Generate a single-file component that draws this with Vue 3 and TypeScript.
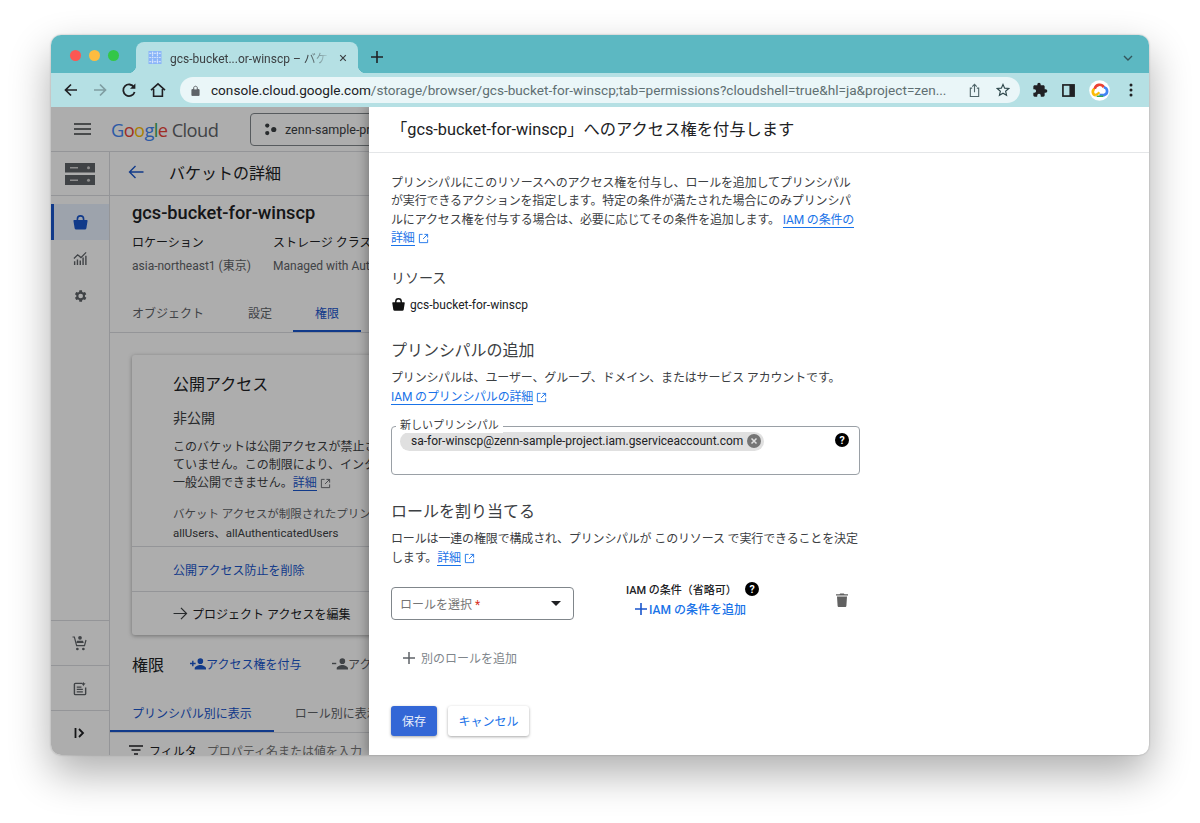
<template>
  <div class="desk">
    <div class="window">
      <div class="tabstrip">
        <div class="lights"><i class="red"></i><i class="yellow"></i><i class="green"></i></div>
        <div class="tab">
          <svg class="favicon" viewBox="0 0 16 16" width="16" height="13">
            <rect width="16" height="16" fill="#8ab4f8" />
            <path d="M1 3h14M1 8h14M1 13h14M5 1v14M11 1v14" stroke="#d5e4fb" stroke-width="1.4" stroke-dasharray="2 1" fill="none" />
          </svg>
          <span class="tab-title">gcs-bucket...or-winscp – バケット</span>
          <svg class="tab-close" viewBox="0 0 10 10" width="10" height="10">
            <path d="M1.5 1.5l7 7M8.5 1.5l-7 7" stroke="#3c4043" stroke-width="1.5" />
          </svg>
        </div>
        <svg class="new-tab" viewBox="0 0 12 12" width="12" height="12">
          <path d="M6 0v12M0 6h12" stroke="#1f2124" stroke-width="1.6" />
        </svg>
        <svg class="tab-menu" viewBox="0 0 10 6" width="10" height="6">
          <path d="M1 1l4 4 4-4" stroke="#33565b" stroke-width="1.4" fill="none" />
        </svg>
      </div>

      <div class="toolbar">
        <svg class="nav" viewBox="0 0 16 16" width="16" height="16">
          <path d="M14 8H2.5M8 2.5L2.5 8 8 13.5" stroke="#202124" stroke-width="1.7" fill="none" />
        </svg>
        <svg class="nav" viewBox="0 0 16 16" width="16" height="16">
          <path d="M2 8h11.5M8 2.5L13.5 8 8 13.5" stroke="#7f9da1" stroke-width="1.7" fill="none" />
        </svg>
        <svg class="nav" viewBox="0 0 16 16" width="16" height="16">
          <path d="M13 5.2A5.8 5.8 0 1 0 13.6 10" stroke="#202124" stroke-width="1.8" fill="none" />
          <path d="M14.4 1.4v5.4H9z" fill="#202124" />
        </svg>
        <svg class="nav" viewBox="0 0 16 16" width="16" height="16">
          <path d="M1 8.2L8 1.8l7 6.4M3.6 7v7.2h8.8V7" stroke="#202124" stroke-width="1.6" fill="none" />
        </svg>
        <div class="omnibox">
          <svg viewBox="0 0 10 12" width="9" height="11">
            <path d="M1 5h8v6.5H1zM3 5V3.2a2 2 0 0 1 4 0V5" fill="#5f6368" stroke="#5f6368" stroke-width="1" />
            <rect x="3.6" y="1.8" width="2.8" height="3" fill="#eaf6f8" />
          </svg>
          <span class="url"><b>console.cloud.google.com</b>/storage/browser/gcs-bucket-for-winscp;tab=permissions?cloudshell=true&amp;hl=ja&amp;project=zen...</span>
          <svg class="omni-share" viewBox="0 0 14 16" width="13" height="15">
            <path d="M4.5 5.5H2.5v9h9v-9h-2M7 10V1.5M4.6 3.8L7 1.4l2.4 2.4" stroke="#50666a" stroke-width="1.2" fill="none" />
          </svg>
          <svg class="omni-star" viewBox="0 0 16 16" width="14" height="14">
            <path d="M8 1.6l1.9 4.3 4.7.4-3.6 3.1 1.1 4.6L8 11.6 3.9 14l1.1-4.6-3.6-3.1 4.7-.4z" stroke="#30494d" stroke-width="1.3" fill="none" />
          </svg>
        </div>
        <div class="extensions">
          <svg viewBox="0 0 24 24" width="16" height="16">
            <path d="M20.5 11H19V7c0-1.1-.9-2-2-2h-4V3.5a2.5 2.5 0 0 0-5 0V5H4c-1.1 0-2 .9-2 2v3.8h1.5a2.7 2.7 0 0 1 0 5.4H2V20c0 1.100.9 2 2 2h3.800v-1.500a2.700 2.700 0 0 1 5.400 0V22H17c1.100 0 2-.9 2-2v-4h1.500a2.500 2.500 0 0 0 0-5z" fill="#202124" />
          </svg>
          <svg viewBox="0 0 14 14" width="13" height="13">
            <rect x="1" y="1" width="12" height="12" fill="none" stroke="#202124" stroke-width="1.8" />
            <rect x="8" y="1" width="5" height="12" fill="#202124" />
          </svg>
          <svg class="avatar" viewBox="0 0 22 22" width="21" height="21">
            <circle cx="11" cy="11" r="10.800" fill="#fff" />
            <path d="M7.200 15.800a3.400 3.400 0 0 1-1.200-6.500" stroke="#fbbc04" stroke-width="2.800" fill="none" />
            <path d="M6 9.300a5.200 5.200 0 0 1 9.600-1.700" stroke="#ea4335" stroke-width="2.800" fill="none" />
            <path d="M15.600 7.600a4.200 4.200 0 0 1 .2 8.200H11" stroke="#4285f4" stroke-width="2.800" fill="none" />
            <path d="M8 17h7" stroke="#34a853" stroke-width="1.600" />
            <path d="M7.200 15.800L11 13" stroke="#fbbc04" stroke-width="2.400" />
          </svg>
          <svg viewBox="0 0 4 14" width="4" height="14">
            <circle cx="2" cy="2" r="1.500" fill="#202124" /><circle cx="2" cy="7" r="1.500" fill="#202124" /><circle cx="2" cy="12" r="1.500" fill="#202124" />
          </svg>
        </div>
      </div>

      <div class="viewport">
        <div class="console">
          <header class="top">
            <svg class="burger" viewBox="0 0 17 12" width="17" height="12">
              <path d="M0 1h17M0 6h17M0 11h17" stroke="#3c4043" stroke-width="1.600" />
            </svg>
            <span class="logo"><i class="g-b">G</i><i class="g-r">o</i><i class="g-y">o</i><i class="g-b">g</i><i class="g-g">l</i><i class="g-r">e</i> <em>Cloud</em></span>
            <div class="project">
              <svg viewBox="0 0 14 14" width="13" height="13">
                <circle cx="3.500" cy="2.800" r="2.300" fill="#3c4043" />
                <circle cx="3.500" cy="10.800" r="2.300" fill="#3c4043" />
                <circle cx="10.500" cy="7" r="2.800" fill="#3c4043" />
              </svg>
              <span>zenn-sample-project</span>
            </div>
          </header>
          <div class="console-main">
            <nav class="rail">
              <div class="rail-logo">
                <svg viewBox="0 0 30 22" width="30" height="22">
                  <path d="M0 0h30v9.500H0zM0 12h30v10H0z" fill="#5f6368" />
                  <path d="M5 4h8v1.500H5zM5 16.500h8V18H5z" fill="#d0d0d0" />
                  <circle cx="23.500" cy="4.700" r="1.500" fill="#d0d0d0" />
                  <circle cx="23.500" cy="17.200" r="1.500" fill="#d0d0d0" />
                </svg>
              </div>
              <div class="rail-item active">
                <svg viewBox="0 0 24 24" width="17" height="17"><path fill-rule="evenodd" d="M6.500 8.500V7a5.500 5.500 0 0 1 11 0v1.500H21c.6 0 1 .5 1 1.100l-1.700 10.600a2.200 2.200 0 0 1-2.200 1.800H5.900a2.200 2.200 0 0 1-2.200-1.800L2 9.600c0-.6.400-1.100 1-1.100zM8.800 8.500h6.400V7a3.200 3.200 0 0 0-6.400 0z" fill="#1a56cc" /></svg>
              </div>
              <div class="rail-item">
                <svg viewBox="0 0 16 16" width="15" height="15"><path d="M1 15v-4h1.500v4zM4 15V9h1.500v6zM7 15v-5h1.500v5zM10 15V7h1.500v8zM13 15V5h1.500v10z" fill="#5f6368" /><path d="M1 8l4-4 3.500 3L14 1.500" stroke="#5f6368" stroke-width="1.300" fill="none" /></svg>
              </div>
              <div class="rail-item">
                <svg viewBox="0 0 24 24" width="16" height="16"><path d="M19.400 13a7.700 7.700 0 0 0 0-2l2.100-1.600-2-3.500-2.500 1a7.300 7.300 0 0 0-1.700-1L15 3.300h-4l-.4 2.600a7.300 7.300 0 0 0-1.700 1l-2.500-1-2 3.500L6.500 11a7.700 7.700 0 0 0 0 2l-2.100 1.600 2 3.500 2.500-1a7.300 7.300 0 0 0 1.700 1l.4 2.600h4l.4-2.600a7.300 7.300 0 0 0 1.700-1l2.500 1 2-3.500zM13 15.500a3.500 3.500 0 1 1 0-7 3.500 3.500 0 0 1 0 7z" fill="#5f6368" /></svg>
              </div>
              <div class="rail-bottom">
                <div class="rail-foot">
                  <svg viewBox="0 0 24 24" width="18" height="18"><path d="M12 2.500a2.500 2.500 0 1 1 0 5 2.500 2.500 0 0 1 0-5zM7 12l1-3h8l1 3z" fill="#5f6368" /><path d="M2 4h2.500l3 11.500h10.500L20 8" stroke="#5f6368" stroke-width="1.600" fill="none" /><circle cx="8.500" cy="20" r="1.800" fill="#5f6368" /><circle cx="16.500" cy="20" r="1.800" fill="#5f6368" /></svg>
                </div>
                <div class="rail-foot">
                  <svg viewBox="0 0 16 16" width="15" height="15"><path d="M10 2.500H2.500c-.5 0-1 .5-1 1v10c0 .5.500 1 1 1h10c.5 0 1-.5 1-1V7" stroke="#5f6368" stroke-width="1.500" fill="none" /><path d="M4 6.500h5M4 9h6.500M4 11.500h6.500" stroke="#5f6368" stroke-width="1.300" /><path d="M11 1l1 1.500 1.500.5-1.500 1-1 1.500-.7-1.500L9 3l1.300-.5z" fill="#5f6368" /></svg>
                </div>
                <div class="rail-foot">
                  <svg viewBox="0 0 12 10" width="12" height="10"><path d="M1.500 0v10" stroke="#202124" stroke-width="1.800" /><path d="M5 1l4 4-4 4" stroke="#202124" stroke-width="1.800" fill="none" /></svg>
                </div>
              </div>
            </nav>

            <main class="detail">
              <div class="detail-bar">
                <svg viewBox="0 0 16 14" width="16" height="14">
                  <path d="M15.500 7H1.500M7.500 1L1.500 7l6 6" stroke="#1a56cc" stroke-width="1.400" fill="none" />
                </svg>
                <span>バケットの詳細</span>
              </div>
              <div class="detail-body">
                <h1 class="bucket-name">gcs-bucket-for-winscp</h1>
                <div class="meta">
                  <div class="meta-col">
                    <div>ロケーション</div>
                    <div class="muted">asia-northeast1 (東京)</div>
                  </div>
                  <div class="meta-col">
                    <div>ストレージ クラス</div>
                    <div class="muted">Managed with Autoclass</div>
                  </div>
                </div>
              </div>
              <div class="tabs">
                <span class="t1">オブジェクト</span>
                <span class="t2">設定</span>
                <span class="t3">権限</span>
              </div>
              <section class="card">
                <div class="card-main">
                  <h2>公開アクセス</h2>
                  <h3>非公開</h3>
                  <p>このバケットは公開アクセスが禁止されており、公開され<br />ていません。この制限により、インターネット上で<br />一般公開できません。<a>詳細</a>
                    <svg class="ext" viewBox="0 0 12 12" width="11" height="11"><path d="M5 1.500H1.500v9h9V7M7 1.500h3.500V5M10.500 1.500L5.500 6.500" stroke="#5f6368" stroke-width="1" fill="none" /></svg>
                  </p>
                  <p class="restricted">バケット アクセスが制限されたプリンシパル</p>
                  <p class="users">allUsers、allAuthenticatedUsers</p>
                </div>
                <div class="card-link">公開アクセス防止を削除</div>
                <div class="card-edit">
                  <svg viewBox="0 0 16 14" width="15" height="13"><path d="M.5 7h14M8.500 1l6 6-6 6" stroke="#3c4043" stroke-width="1.300" fill="none" /></svg>
                  <span>プロジェクト アクセスを編集</span>
                </div>
              </section>
              <div class="perm-bar">
                <h2>権限</h2>
                <span class="grant">
                  <svg viewBox="0 0 17 13" width="16" height="13"><path d="M11 1a3 3 0 1 1 0 6 3 3 0 0 1 0-6zM5 13v-1.500C5 9.500 9 8 11 8s6 1.500 6 3.500V13z" fill="#1a56cc" /><path d="M0 6.500h6M3 3.500v6" stroke="#1a56cc" stroke-width="1.500" /></svg>
                  アクセス権を付与
                </span>
                <span class="revoke">
                  <svg viewBox="0 0 17 13" width="16" height="13"><path d="M11 1a3 3 0 1 1 0 6 3 3 0 0 1 0-6zM5 13v-1.500C5 9.500 9 8 11 8s6 1.500 6 3.500V13z" fill="#5f6368" /><path d="M0 6.500h4.500" stroke="#5f6368" stroke-width="1.500" /></svg>
                  アクセス権を削除
                </span>
              </div>
              <div class="view-tabs">
                <span class="v1">プリンシパル別に表示</span>
                <span class="v2">ロール別に表示</span>
              </div>
              <div class="filter">
                <svg viewBox="0 0 14 10" width="14" height="10"><path d="M0 1h14M2.500 5h9M5 9h4" stroke="#202124" stroke-width="1.500" /></svg>
                <span class="filter-label">フィルタ</span>
                <span class="filter-hint">プロパティ名または値を入力</span>
              </div>
            </main>
          </div>
        </div>

        <div class="scrim"></div>

        <aside class="drawer">
          <div class="drawer-head">「gcs-bucket-for-winscp」へのアクセス権を付与します</div>
          <div class="drawer-body">
            <p class="intro">
              プリンシパルにこのリソースへのアクセス権を付与し、ロールを追加してプリンシパル<br />
              が実行できるアクションを指定します。特定の条件が満たされた場合にのみプリンシパ<br />
              ルにアクセス権を付与する場合は、必要に応じてその条件を追加します。 <a>IAM の条件の</a><br />
              <a>詳細</a>
              <svg class="ext" viewBox="0 0 12 12" width="11" height="11"><path d="M5 1.500H1.500v9h9V7M7 1.500h3.500V5M10.500 1.500L5.500 6.500" stroke="#1a73e8" stroke-width="1" fill="none" /></svg>
            </p>

            <h4 class="resource-title">リソース</h4>
            <div class="resource">
              <svg viewBox="0 0 24 24" width="15" height="15"><path fill-rule="evenodd" d="M6.500 8.500V7a5.500 5.500 0 0 1 11 0v1.500H21c.6 0 1 .5 1 1.100l-1.700 10.600a2.200 2.200 0 0 1-2.200 1.800H5.900a2.200 2.200 0 0 1-2.200-1.800L2 9.600c0-.6.400-1.100 1-1.100zM8.800 8.500h6.400V7a3.200 3.200 0 0 0-6.400 0z" fill="#111" /></svg>
              <span>gcs-bucket-for-winscp</span>
            </div>

            <h3 class="section add-title">プリンシパルの追加</h3>
            <p class="desc">
              プリンシパルは、ユーザー、グループ、ドメイン、またはサービス アカウントです。<br />
              <a>IAM のプリンシパルの詳細</a>
              <svg class="ext" viewBox="0 0 12 12" width="11" height="11"><path d="M5 1.500H1.500v9h9V7M7 1.500h3.500V5M10.500 1.500L5.500 6.500" stroke="#1a73e8" stroke-width="1" fill="none" /></svg>
            </p>

            <div class="principal">
              <span class="field-label">新しいプリンシパル</span>
              <div class="chip">
                <span>sa-for-winscp@zenn-sample-project.iam.gserviceaccount.com</span>
                <svg viewBox="0 0 14 14" width="14" height="14"><circle cx="7" cy="7" r="7" fill="#757575" /><path d="M4.500 4.500l5 5M9.500 4.500l-5 5" stroke="#e0e0e0" stroke-width="1.500" /></svg>
              </div>
              <svg class="help" viewBox="0 0 14 14" width="14" height="14"><circle cx="7" cy="7" r="7" fill="#000" /><text x="7" y="10.700" text-anchor="middle" class="help-mark">?</text></svg>
            </div>

            <h3 class="section role-title">ロールを割り当てる</h3>
            <p class="desc">
              ロールは一連の権限で構成され、プリンシパルが このリソース で実行できることを決定<br />
              します。<a>詳細</a>
              <svg class="ext" viewBox="0 0 12 12" width="11" height="11"><path d="M5 1.500H1.500v9h9V7M7 1.500h3.500V5M10.500 1.500L5.500 6.500" stroke="#1a73e8" stroke-width="1" fill="none" /></svg>
            </p>

            <div class="role-row">
              <div class="select">
                <span>ロールを選択 <em>*</em></span>
                <i class="caret"></i>
              </div>
              <div class="condition">
                <div class="condition-label">
                  <span>IAM の条件（省略可）</span>
                  <svg viewBox="0 0 14 14" width="14" height="14"><circle cx="7" cy="7" r="7" fill="#000" /><text x="7" y="10.700" text-anchor="middle" class="help-mark">?</text></svg>
                </div>
                <div class="condition-add">
                  <svg viewBox="0 0 12 12" width="12" height="12"><path d="M6 0v12M0 6h12" stroke="#1a56cc" stroke-width="1.600" /></svg>
                  <span>IAM の条件を追加</span>
                </div>
              </div>
              <svg class="trash" viewBox="0 0 12 14" width="12" height="14"><path d="M1 3.500h10l-.6 9.200c0 .7-.6 1.300-1.300 1.300H2.900c-.7 0-1.300-.6-1.300-1.300zM0 1.200h3.500L4.200.4h3.600l.7.8H12v1.300H0z" fill="#616161" /></svg>
            </div>

            <div class="add-role">
              <svg viewBox="0 0 12 12" width="12" height="12"><path d="M6 0v12M0 6h12" stroke="#5f6368" stroke-width="1.500" /></svg>
              <span>別のロールを追加</span>
            </div>

            <div class="actions">
              <button class="save" type="button">保存</button>
              <button class="cancel" type="button">キャンセル</button>
            </div>
          </div>
        </aside>
      </div>
    </div>
  </div>
</template>

<script setup lang="ts">
</script>

<style>
html,
body {
  margin: 0;
  background: #fff;
}
</style>

<style scoped>
* {
  box-sizing: border-box;
}

.desk {
  width: 1200px;
  height: 823px;
  padding: 35px 51px 68px;
  background: #fff;
  overflow: hidden;
  font-family: Roboto, "Noto Sans CJK JP", sans-serif;
  color: #202124;
}

.window {
  height: 720px;
  border-radius: 10px;
  overflow: hidden;
  display: flex;
  flex-direction: column;
  box-shadow: 0 18px 42px rgba(0, 0, 0, 0.32), 0 0 2px rgba(0, 0, 0, 0.3);
}

.tabstrip {
  height: 38px;
  flex: none;
  background: #5cb8c2;
  display: flex;
  align-items: flex-end;
  position: relative;
}

.lights {
  display: flex;
  gap: 8px;
  align-self: flex-start;
  margin: 15px 0 0 19px;
  width: 66px;
  flex: none;
}

.lights i {
  width: 11px;
  height: 11px;
  border-radius: 50%;
}

.red { background: #fc5753; }
.yellow { background: #fdbc40; }
.green { background: #33c748; }

.tab {
  width: 222px;
  height: 31px;
  background: #b5e0e4;
  border-radius: 8px 8px 0 0;
  display: flex;
  align-items: center;
  padding: 0 11px;
  gap: 7px;
  flex: none;
  position: relative;
}

.tab::before,
.tab::after {
  content: "";
  position: absolute;
  bottom: 0;
  width: 8px;
  height: 8px;
}

.tab::before {
  left: -8px;
  background: radial-gradient(circle at 0 0, transparent 8px, #b5e0e4 8.5px);
}

.tab::after {
  right: -8px;
  background: radial-gradient(circle at 100% 0, transparent 8px, #b5e0e4 8.5px);
}

.favicon {
  flex: none;
  margin-right: 0;
}

.tab-title {
  font-size: 12px;
  color: #3c4043;
  width: 160px;
  margin-left: 0;
  white-space: nowrap;
  overflow: hidden;
  flex: none;
  -webkit-mask-image: linear-gradient(90deg, #000 85%, transparent);
  mask-image: linear-gradient(90deg, #000 85%, transparent);
}

.tab-close {
  margin-left: 2px;
}

.new-tab {
  margin: 0 0 10px 13px;
}

.tab-menu {
  position: absolute;
  right: 16px;
  top: 20px;
}

.toolbar {
  height: 34px;
  flex: none;
  background: #b5e0e4;
  display: flex;
  align-items: center;
  padding-left: 12px;
}

.nav {
  margin-right: 13px;
  flex: none;
}

.omnibox {
  width: 840px;
  height: 26px;
  flex: none;
  margin-left: 1px;
  border-radius: 13px;
  background: #eaf6f8;
  display: flex;
  align-items: center;
  padding-left: 11px;
}

.url {
  margin-left: 11px;
  font-size: 13.600px;
  color: #5f6f72;
  white-space: nowrap;
  width: 742px;
  flex: none;
  overflow: hidden;
}

.url b {
  font-weight: 400;
  color: #202124;
}

.omni-share {
  margin-left: 15px;
  flex: none;
}

.omni-star {
  margin-left: 15px;
  flex: none;
}

.extensions {
  display: flex;
  align-items: center;
  margin-left: 12px;
  gap: 14px;
}

.avatar {
  margin-right: 1px;
}

.extensions svg:last-child {
  margin-left: 4px;
}

.viewport {
  flex: 1;
  min-height: 0;
  position: relative;
  overflow: hidden;
  background: #fff;
}

.console {
  height: 100%;
  display: flex;
  flex-direction: column;
  font-size: 12px;
}

.top {
  height: 45px;
  flex: none;
  border-bottom: 1px solid #dadce0;
  display: flex;
  align-items: center;
  padding-left: 23px;
}

.logo {
  margin-left: 20px;
  font-family: "Open Sans", sans-serif;
  font-size: 18.300px;
  letter-spacing: -0.6px;
  white-space: nowrap;
  width: 139px;
  flex: none;
}

.logo i {
  font-style: normal;
}

.logo em {
  font-style: normal;
  color: #5f6368;
}

.g-b { color: #4285f4; }
.g-r { color: #ea4335; }
.g-y { color: #fbbc04; }
.g-g { color: #34a853; }

.project {
  width: 220px;
  height: 33px;
  border: 1px solid #80868b;
  border-radius: 4px;
  display: flex;
  align-items: center;
  padding-left: 13px;
  gap: 8px;
  font-size: 12.500px;
  color: #3c4043;
  flex: none;
}

.console-main {
  flex: 1;
  min-height: 0;
  display: flex;
}

.rail {
  width: 59px;
  flex: none;
  border-right: 1px solid #dadce0;
  display: flex;
  flex-direction: column;
}

.rail-logo {
  height: 44px;
  flex: none;
  border-bottom: 1px solid #dadce0;
  display: flex;
  align-items: center;
  justify-content: center;
  margin-bottom: 8px;
}

.rail-item {
  height: 37px;
  flex: none;
  display: flex;
  align-items: center;
  justify-content: center;
}

.rail-item.active {
  background: #e8f0fe;
  border-left: 3px solid #1a56cc;
  padding-right: 3px;
  height: 36px;
}

.rail-bottom {
  margin-top: auto;
}

.rail-foot {
  height: 45px;
  border-top: 1px solid #dadce0;
  display: flex;
  align-items: center;
  justify-content: center;
}

.detail {
  flex: 1;
  min-width: 0;
  overflow: hidden;
}

.detail-bar {
  height: 44px;
  border-bottom: 1px solid #dadce0;
  display: flex;
  align-items: center;
  padding: 0 0 3px 18px;
  gap: 25px;
  font-size: 16px;
}

.detail-body {
  padding-left: 22px;
  height: 95px;
}

.bucket-name {
  margin: 0;
  padding-top: 4px;
  font-size: 18.200px;
  line-height: 26px;
  font-weight: 500;
}

.meta {
  display: flex;
  margin-top: 6px;
  white-space: nowrap;
}

.meta-col {
  width: 141px;
  line-height: 23px;
}

.muted {
  color: #5f6368;
}

.tabs {
  height: 42px;
  border-bottom: 1px solid #dadce0;
  color: #5f6368;
  display: flex;
  align-items: flex-end;
  width: 780px;
}

.tabs span {
  flex: none;
  height: 36px;
  line-height: 36px;
}

.t1 {
  margin-left: 22px;
}

.t2 {
  margin-left: 44px;
}

.t3 {
  margin-left: 43px;
  color: #1a56cc;
  position: relative;
}

.t3::after {
  content: "";
  position: absolute;
  left: -22px;
  right: -22px;
  bottom: 0;
  height: 2px;
  background: #1a56cc;
}

.card {
  margin: 22px 0 0 22px;
  width: 700px;
  height: 280px;
  border-radius: 3px;
  box-shadow: 0 1px 4px rgba(0, 0, 0, 0.35);
  background: #fff;
  display: flex;
  flex-direction: column;
}

.card-main {
  height: 191px;
  padding: 17px 0 0 41px;
  flex: none;
}

.card h2 {
  margin: 0;
  font-size: 16px;
  font-weight: 400;
  line-height: 26px;
}

.card h3 {
  margin: 8px 0 0;
  font-size: 14px;
  font-weight: 400;
  line-height: 24px;
  color: #3c4043;
}

.card p {
  margin: 8px 0 0;
  line-height: 18px;
  white-space: nowrap;
  width: 400px;
  color: #3c4043;
}

.card a {
  color: #1a56cc;
  border-bottom: 1px solid #1a56cc;
}

.card p.restricted {
  margin-top: 13px;
  color: #5f6368;
  font-size: 11.500px;
}

.card p.users {
  margin-top: 1px;
  font-size: 11.500px;
}

.card-link {
  height: 45px;
  border-top: 1px solid #dadce0;
  padding-left: 41px;
  display: flex;
  align-items: center;
  color: #1a56cc;
  flex: none;
}

.card-edit {
  flex: 1;
  border-top: 1px solid #dadce0;
  padding-left: 41px;
  display: flex;
  align-items: center;
  gap: 4px;
}

.perm-bar {
  height: 59px;
  display: flex;
  align-items: center;
  padding: 0 0 2px 22px;
  white-space: nowrap;
}

.perm-bar h2 {
  margin: 0;
  font-size: 16px;
  font-weight: 400;
  width: 58px;
}

.grant {
  color: #1a56cc;
  display: flex;
  align-items: center;
  width: 142px;
  flex: none;
}

.revoke {
  color: #5f6368;
  display: flex;
  align-items: center;
}

.view-tabs {
  height: 39px;
  border-bottom: 1px solid #dadce0;
  display: flex;
  align-items: flex-end;
  white-space: nowrap;
  width: 780px;
}

.view-tabs span {
  height: 36px;
  line-height: 36px;
}

.v1 {
  margin-left: 22px;
  color: #1a56cc;
  position: relative;
}

.v1::after {
  content: "";
  position: absolute;
  left: -22px;
  right: -22px;
  bottom: 0;
  height: 2px;
  background: #1a56cc;
}

.v2 {
  margin-left: 43px;
  color: #5f6368;
}

.filter {
  height: 34px;
  display: flex;
  align-items: center;
  padding-left: 19px;
  white-space: nowrap;
}

.filter-label {
  margin-left: 6px;
}

.filter-hint {
  margin-left: 10px;
  color: #757575;
}

.scrim {
  position: absolute;
  inset: 0;
  background: rgba(0, 0, 0, 0.32);
}

.drawer {
  position: absolute;
  top: 0;
  right: 0;
  bottom: 0;
  width: 780px;
  background: #fff;
  box-shadow: -2px 0 10px rgba(0, 0, 0, 0.3);
  display: flex;
  flex-direction: column;
}

.drawer-head {
  height: 46px;
  flex: none;
  border-bottom: 1px solid #e4e6e8;
  padding: 0 0 3px 22px;
  display: flex;
  align-items: center;
  font-size: 16.300px;
  color: #202124;
  white-space: nowrap;
}

.drawer-body {
  padding: 21px 0 0 22px;
  width: 491px;
  font-size: 12px;
  color: #3c4043;
}

.drawer-body p {
  margin: 0;
  letter-spacing: -0.15px;
  white-space: nowrap;
}

.drawer-body a {
  color: #1a73e8;
  border-bottom: 1px solid #1a73e8;
}

.ext {
  margin-left: 3px;
  vertical-align: -2px;
}

.intro {
  line-height: 18.400px;
}

.resource-title {
  margin: 19px 0 0;
  font-size: 14px;
  font-weight: 400;
  line-height: 22px;
}

.resource {
  margin-top: 6px;
  height: 20px;
  display: flex;
  align-items: center;
  gap: 4px;
  font-size: 12px;
  color: #202124;
}

.section {
  margin: 0;
  font-size: 16px;
  font-weight: 400;
  line-height: 24px;
  color: #3c4043;
}

.add-title {
  margin-top: 24px;
}

.drawer-body .desc {
  margin-top: 6px;
  line-height: 19px;
}

.principal {
  margin-top: 19px;
  height: 49px;
  border: 1px solid #9aa0a6;
  border-radius: 4px;
  position: relative;
  padding: 5px 0 0 8px;
}

.field-label {
  position: absolute;
  left: 4px;
  top: -8px;
  padding: 0 4px;
  background: #fff;
  font-size: 11px;
  line-height: 14px;
  color: #3c4043;
}

.chip {
  width: 364px;
  height: 19px;
  border-radius: 10px;
  background: #e0e0e0;
  display: flex;
  align-items: center;
  justify-content: space-between;
  padding: 0 3px 0 11px;
  font-size: 12px;
  color: #202124;
  white-space: nowrap;
}

.help {
  position: absolute;
  top: 6px;
  right: 10px;
}

.help-mark {
  fill: #fff;
  font: 700 10.500px Roboto, sans-serif;
}

.role-title {
  margin-top: 25px;
}

.role-row {
  margin-top: 19px;
  display: flex;
  position: relative;
  height: 49px;
}

.select {
  width: 183px;
  height: 33px;
  border: 1px solid #80868b;
  border-radius: 4px;
  display: flex;
  align-items: center;
  justify-content: space-between;
  padding: 0 12px 0 8px;
  color: #757575;
  flex: none;
}

.select em {
  color: #d93025;
  font-style: normal;
}

.caret {
  border: 5px solid transparent;
  border-top: 5px solid #202124;
  border-bottom: 0;
}

.condition {
  margin: -6px 0 0 52px;
  width: 210px;
  flex: none;
}

.condition-label {
  display: flex;
  align-items: center;
  gap: 8px;
  height: 16px;
  color: #202124;
  font-size: 11px;
  font-weight: 500;
  white-space: nowrap;
}

.condition-add {
  margin: 2px 0 0 9px;
  display: flex;
  align-items: center;
  gap: 2px;
  height: 20px;
  color: #1a73e8;
  font-weight: 500;
}

.trash {
  margin-top: 6px;
  flex: none;
}

.add-role {
  margin-top: 12px;
  padding-left: 12px;
  height: 20px;
  display: flex;
  align-items: center;
  gap: 6px;
  color: #80868b;
}

.actions {
  margin-top: 38px;
  display: flex;
  gap: 11px;
}

.actions button {
  height: 30px;
  border: 0;
  border-radius: 3px;
  font: 12px Roboto, "Noto Sans CJK JP", sans-serif;
  box-shadow: 0 1px 3px rgba(0, 0, 0, 0.35);
  padding: 0;
}

.save {
  width: 46px;
  background: #3367d6;
  color: #e8eefb;
}

.cancel {
  width: 81px;
  background: #fff;
  color: #1a73e8;
}
</style>
